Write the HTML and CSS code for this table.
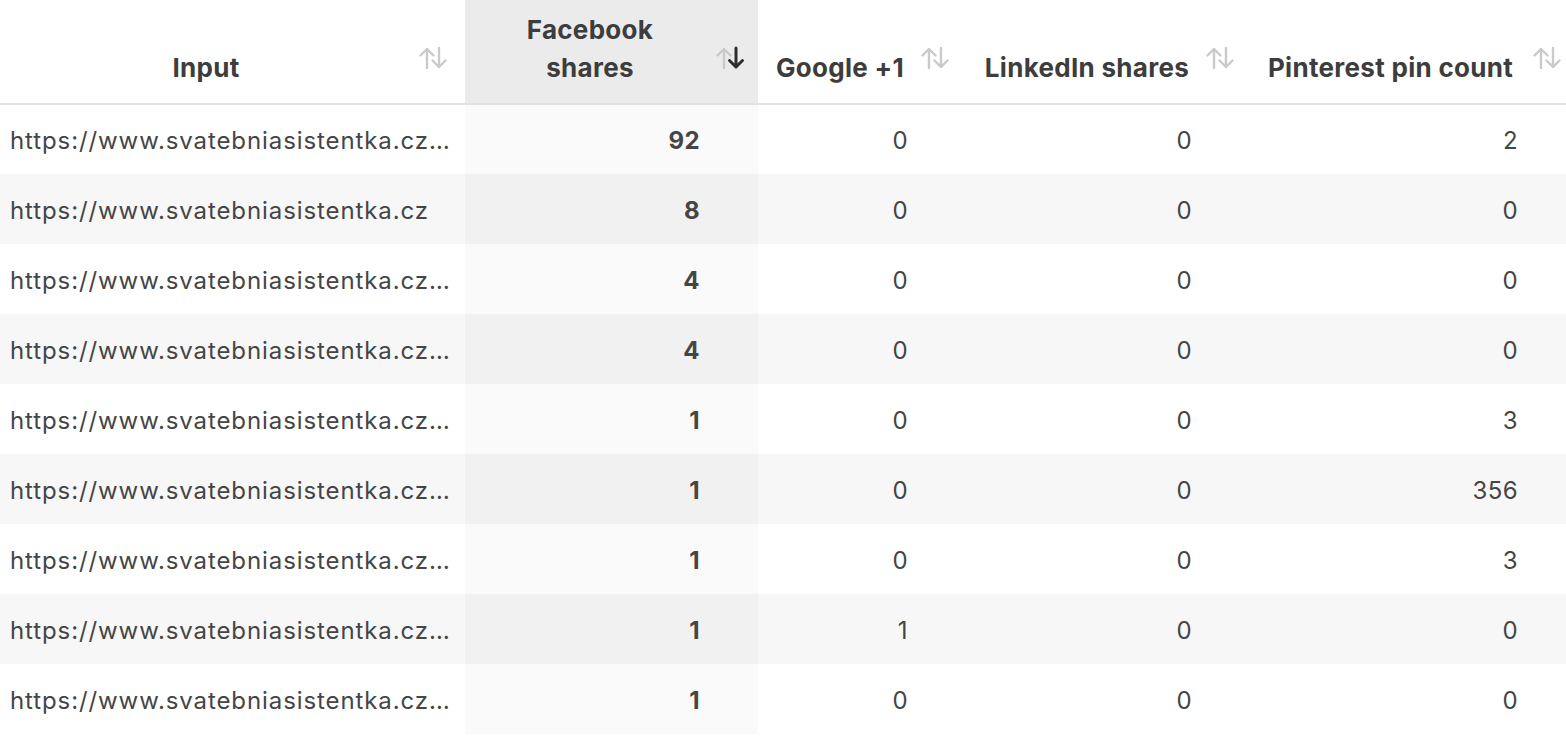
FILE: index.html
```html
<!DOCTYPE html>
<html>
<head>
<meta charset="utf-8">
<link rel="stylesheet" href="styles.css">
</head>
<body>
<table class="grid">
  <colgroup>
    <col class="c-input"><col class="c-fb"><col class="c-g"><col class="c-li"><col class="c-pin">
  </colgroup>
  <thead>
    <tr>
      <th class="h h-input"><div class="hin"><span class="ht">Input</span><svg class="sort" viewBox="0 0 30 24"><path class="up" d="M9 22V3M2.5 9.5L9 3l6.5 6.5"/><path class="dn" d="M21 2v19M14.5 14.5L21 21l6.5-6.5"/></svg></div></th>
      <th class="h h-fb sorted"><div class="hin"><span class="ht">Facebook<br>shares</span><svg class="sort" viewBox="0 0 30 24"><path class="up" d="M9 22V3M2.5 9.5L9 3l6.5 6.5"/><path class="dn active" d="M21 2v19M14.5 14.5L21 21l6.5-6.5"/></svg></div></th>
      <th class="h h-g"><div class="hin"><span class="ht">Google +1</span><svg class="sort" viewBox="0 0 30 24"><path class="up" d="M9 22V3M2.5 9.5L9 3l6.5 6.5"/><path class="dn" d="M21 2v19M14.5 14.5L21 21l6.5-6.5"/></svg></div></th>
      <th class="h h-li"><div class="hin"><span class="ht">LinkedIn shares</span><svg class="sort" viewBox="0 0 30 24"><path class="up" d="M9 22V3M2.5 9.5L9 3l6.5 6.5"/><path class="dn" d="M21 2v19M14.5 14.5L21 21l6.5-6.5"/></svg></div></th>
      <th class="h h-pin"><div class="hin"><span class="ht">Pinterest pin count</span><svg class="sort" viewBox="0 0 30 24"><path class="up" d="M9 22V3M2.5 9.5L9 3l6.5 6.5"/><path class="dn" d="M21 2v19M14.5 14.5L21 21l6.5-6.5"/></svg></div></th>
    </tr>
  </thead>
  <tbody>
    <tr><td class="url">https://www.svatebniasistentka.cz…</td><td class="n fb">92</td><td class="n g">0</td><td class="n li">0</td><td class="n pin">2</td></tr>
    <tr><td class="url">https://www.svatebniasistentka.cz</td><td class="n fb">8</td><td class="n g">0</td><td class="n li">0</td><td class="n pin">0</td></tr>
    <tr><td class="url">https://www.svatebniasistentka.cz…</td><td class="n fb">4</td><td class="n g">0</td><td class="n li">0</td><td class="n pin">0</td></tr>
    <tr><td class="url">https://www.svatebniasistentka.cz…</td><td class="n fb">4</td><td class="n g">0</td><td class="n li">0</td><td class="n pin">0</td></tr>
    <tr><td class="url">https://www.svatebniasistentka.cz…</td><td class="n fb">1</td><td class="n g">0</td><td class="n li">0</td><td class="n pin">3</td></tr>
    <tr><td class="url">https://www.svatebniasistentka.cz…</td><td class="n fb">1</td><td class="n g">0</td><td class="n li">0</td><td class="n pin">356</td></tr>
    <tr><td class="url">https://www.svatebniasistentka.cz…</td><td class="n fb">1</td><td class="n g">0</td><td class="n li">0</td><td class="n pin">3</td></tr>
    <tr><td class="url">https://www.svatebniasistentka.cz…</td><td class="n fb">1</td><td class="n g">1</td><td class="n li">0</td><td class="n pin">0</td></tr>
    <tr><td class="url">https://www.svatebniasistentka.cz…</td><td class="n fb">1</td><td class="n g">0</td><td class="n li">0</td><td class="n pin">0</td></tr>
  </tbody>
</table>
</body>
</html>
```

FILE: styles.css
```css
html, body {
  margin: 0;
  padding: 0;
  background: #ffffff;
}
body {
  font-family: Inter, "Liberation Sans", Arial, sans-serif;
  color: #444444;
}
.grid {
  width: 1566px;
  border-collapse: collapse;
  table-layout: fixed;
}
.c-input { width: 465px; }
.c-fb { width: 293px; }
.c-g { width: 205px; }
.c-li { width: 283px; }
.c-pin { width: 320px; }

.h {
  height: 103px;
  padding: 0;
  border-bottom: 2px solid #e2e2e2;
  vertical-align: bottom;
  font-weight: 700;
  font-size: 26px;
  letter-spacing: 0.3px;
  line-height: 38px;
  color: #3d3d3d;
}
.h.sorted { background: #ebebeb; }
.hin {
  display: flex;
  align-items: flex-end;
  padding-bottom: 16px;
}
.ht {
  flex: 1;
  text-align: center;
  white-space: nowrap;
}
.sort {
  width: 30px;
  height: 24px;
  flex: none;
  margin-bottom: 17px;
  margin-left: 6px;
}
.sort path {
  fill: none;
  stroke: #cacaca;
  stroke-width: 2.4;
  stroke-linecap: round;
  stroke-linejoin: round;
}
.sort path.active {
  stroke: #2e2e2e;
  stroke-width: 3;
}
.h-input .hin { padding-left: 0; padding-right: 17px; }
.h-fb .hin { padding-left: 6px; padding-right: 13px; }
.h-g .hin { padding-left: 8px; padding-right: 13px; }
.h-li .hin { padding-left: 12px; padding-right: 11px; }
.h-pin .hin { padding-left: 9px; padding-right: 4px; }

tbody tr { height: 70px; }
tbody tr:nth-child(even) { background: #f7f7f7; }
td {
  padding: 2px 0 0;
  font-size: 24px;
  letter-spacing: 0.9px;
  color: #454545;
  vertical-align: middle;
  white-space: nowrap;
}
td.url {
  padding-left: 10px;
  padding-right: 6px;
}
td.n { text-align: right; letter-spacing: 0.4px; }
td.fb {
  padding-right: 58px;
  font-weight: 700;
  background: #fafafa;
}
tbody tr:nth-child(even) td.fb { background: #f1f1f1; }
td.g { padding-right: 55px; }
td.li { padding-right: 54px; }
td.pin { padding-right: 48px; }
```
